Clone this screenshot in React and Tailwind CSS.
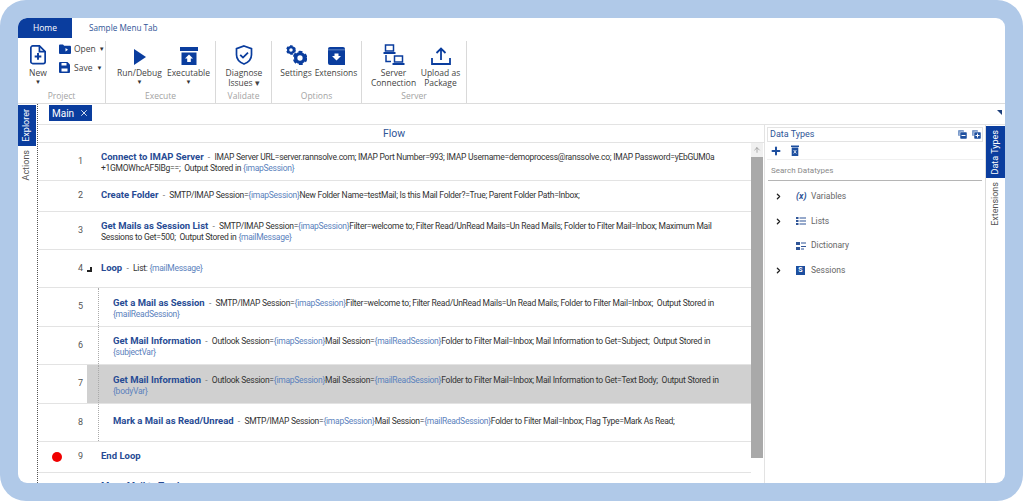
import { X, ChevronRight, Plus, ArrowUp } from 'lucide-react';

const BLUE = '#0a3d9e';

const NewIcon = () => (
  <svg width="18" height="20" viewBox="0 0 18 21" fill="none" stroke={BLUE} strokeWidth="1.8">
    <path d="M1.5 3a2 2 0 0 1 2-2h7l6 6v10.500a2 2 0 0 1-2 2h-11a2 2 0 0 1-2-2z" />
    <path d="M10.500 1v6h6" />
    <path d="M9 8.500v7M5.500 12h7" strokeWidth="2" />
  </svg>
);
const OpenIcon = () => (
  <svg width="12" height="10" viewBox="0 0 12 10" fill={BLUE}>
    <path d="M0 1.500a1 1 0 0 1 1-1h3l1.200 1.200H11a1 1 0 0 1 1 1V9a1 1 0 0 1-1 1H1a1 1 0 0 1-1-1z" />
    <path d="M6.500 4l2.500 1.800-2.500 1.800z" fill="#fff" />
  </svg>
);
const SaveIcon = () => (
  <svg width="11" height="11" viewBox="0 0 11 11" fill={BLUE}>
    <path d="M0 1a1 1 0 0 1 1-1h7.500L11 2.500V10a1 1 0 0 1-1 1H1a1 1 0 0 1-1-1z" />
    <rect x="2.500" y="1" width="5" height="2.500" fill="#fff" />
    <rect x="2.500" y="6.500" width="6" height="3" fill="#fff" />
  </svg>
);
const PlayIcon = () => (
  <svg width="14" height="16" viewBox="0 0 14 16" fill={BLUE}><path d="M1 0l12 8-12 8z" /></svg>
);
const ExecutableIcon = () => (
  <svg width="18" height="18" viewBox="0 0 18 18" fill={BLUE}>
    <rect x="0" y="0" width="18" height="4" />
    <path d="M1.500 5.500h15V18h-15z" />
    <path d="M9 7.500l4 4h-2.200V15H7.200v-3.500H5z" fill="#fff" />
  </svg>
);
const ShieldIcon = () => (
  <svg width="18" height="20" viewBox="0 0 18 20" fill="none" stroke={BLUE} strokeWidth="1.700">
    <path d="M9 1l7.500 2.700v6c0 4.500-3 7.500-7.500 9.300-4.500-1.800-7.500-4.800-7.500-9.300v-6z" />
    <path d="M5.200 9.800l2.800 2.800 5-5" strokeWidth="1.800" />
  </svg>
);
const Gear = ({ cx, cy, r }) => (
  <g>
    <circle cx={cx} cy={cy} r={r * 0.72} fill="none" stroke={BLUE} strokeWidth={r * 0.56} />
    <circle cx={cx} cy={cy} r={r} fill="none" stroke={BLUE} strokeWidth={r * 0.42} strokeDasharray={`${r * 0.62} ${r * 0.47}`} />
  </g>
);
const SettingsIcon = () => (
  <svg width="21" height="20" viewBox="0 0 21 20"><Gear cx={5} cy={5} r={4} /><Gear cx={14} cy={13} r={6} /></svg>
);
const ExtensionsIcon = () => (
  <svg width="17" height="18" viewBox="0 0 17 18" fill={BLUE}>
    <path d="M2 0h13a2 2 0 0 1 2 2v16H2a2 2 0 0 1-2-2V2a2 2 0 0 1 2-2z" />
    <path d="M0 2.500h17v.7H0z" fill="#7f9ed0" />
    <path d="M6.500 6.500h4V9H13l-4.500 4.500L4 9h2.500z" fill="#fff" />
  </svg>
);
const ServerIcon = () => (
  <svg width="22" height="21" viewBox="0 0 22 21" fill="none" stroke={BLUE} strokeWidth="1.500">
    <rect x="2.500" y="1" width="8" height="6" />
    <path d="M0.500 9h12" strokeWidth="2" />
    <path d="M3 11v6.500h5" />
    <rect x="11.500" y="12" width="8" height="6" />
    <path d="M9.500 20h12" strokeWidth="2" />
  </svg>
);
const UploadIcon = () => (
  <svg width="20" height="18" viewBox="0 0 20 18" fill="none" stroke={BLUE} strokeWidth="1.800">
    <path d="M10 13V1.500M5.500 6L10 1.500 14.500 6" />
    <path d="M1 11v6h18v-6" />
  </svg>
);
const Caret = () => <span className="text-[6px] leading-none text-[#333]">▼</span>;

const RibbonButton = ({ icon, children, caret, width }) => (
  <div className="flex shrink-0 flex-col items-center" style={{ width }}>
    <div className="flex h-[24px] items-end">{icon}</div>
    <div className="mt-[3px] text-center text-[8.5px] leading-[9.500px] whitespace-nowrap text-[#444]">{children}</div>
    {caret && <div className="flex h-[8px] items-center"><Caret /></div>}
  </div>
);

const Group = ({ label, width, inset, children }) => (
  <div className="flex h-[62px] shrink-0 flex-col border-r border-[#d9d9d9]" style={{ width }}>
    <div className={`flex h-[49px] ${inset}`}>{children}</div>
    <div className="text-center text-[8.5px] leading-[12px] text-[#a3a3a3]">{label}</div>
  </div>
);

const V = ({ children }) => <span className="text-[#5b82bd]">{children}</span>;

const rows = [
  { n: 1, h: 38, pad: 'pt-[8px]', title: 'Connect to IMAP Server', lines: [
    <>IMAP Server URL=server.rannsolve.com; IMAP Port Number=993; IMAP Username=demoprocess@ranssolve.co; IMAP Password=yEbGUM0a</>,
    <>+1GMOWhcAF5IBg==;&nbsp; Output Stored in <V>{'{imapSession}'}</V></>,
  ] },
  { n: 2, h: 31, pad: 'pt-[8px]', title: 'Create Folder', lines: [
    <>SMTP/IMAP Session=<V>{'{imapSession}'}</V>New Folder Name=testMail; Is this Mail Folder?=True; Parent Folder Path=Inbox;</>,
  ] },
  { n: 3, h: 38, pad: 'pt-[8px]', title: 'Get Mails as Session List', lines: [
    <>SMTP/IMAP Session=<V>{'{imapSession}'}</V>Filter=welcome to; Filter Read/UnRead Mails=Un Read Mails; Folder to Filter Mail=Inbox; Maximum Mail</>,
    <>Sessions to Get=500;&nbsp; Output Stored in <V>{'{mailMessage}'}</V></>,
  ] },
  { n: 4, h: 38, pad: 'pt-[12px]', title: 'Loop', toggle: true, lines: [<>List: <V>{'{mailMessage}'}</V></>] },
  { n: 5, h: 39, pad: 'pt-[9px]', nested: true, title: 'Get a Mail as Session', lines: [
    <>SMTP/IMAP Session=<V>{'{imapSession}'}</V>Filter=welcome to; Filter Read/UnRead Mails=Un Read Mails; Folder to Filter Mail=Inbox;&nbsp; Output Stored in</>,
    <V>{'{mailReadSession}'}</V>,
  ] },
  { n: 6, h: 38, pad: 'pt-[8px]', nested: true, title: 'Get Mail Information', lines: [
    <>Outlook Session=<V>{'{imapSession}'}</V>Mail Session=<V>{'{mailReadSession}'}</V>Folder to Filter Mail=Inbox; Mail Information to Get=Subject;&nbsp; Output Stored in</>,
    <V>{'{subjectVar}'}</V>,
  ] },
  { n: 7, h: 39, pad: 'pt-[9px]', nested: true, selected: true, title: 'Get Mail Information', lines: [
    <>Outlook Session=<V>{'{imapSession}'}</V>Mail Session=<V>{'{mailReadSession}'}</V>Folder to Filter Mail=Inbox; Mail Information to Get=Text Body;&nbsp; Output Stored in</>,
    <V>{'{bodyVar}'}</V>,
  ] },
  { n: 8, h: 38, pad: 'pt-[11px]', nested: true, title: 'Mark a Mail as Read/Unread', lines: [
    <>SMTP/IMAP Session=<V>{'{imapSession}'}</V>Mail Session=<V>{'{mailReadSession}'}</V>Folder to Filter Mail=Inbox; Flag Type=Mark As Read;</>,
  ] },
  { n: 9, h: 31, pad: 'pt-[8px]', title: 'End Loop', breakpoint: true, lines: [] },
  { n: 10, h: 38, pad: 'pt-[7px]', title: 'Move Mail to Trash', hideNumber: true, lines: [] },
];

const RowText = ({ row }) => (
  <div className={`${row.pad} text-[8.5px] leading-[11px] tracking-[-0.26px] whitespace-nowrap text-[#333]`}>
    <div>
      <span className="text-[9.5px] font-bold tracking-normal text-[#274b94]">{row.title}</span>
      {row.lines.length > 0 && <span className="tracking-normal text-[#777]">&nbsp; - &nbsp;</span>}
      {row.lines[0]}
    </div>
    {row.lines[1] && <div>{row.lines[1]}</div>}
  </div>
);

const FlowRow = ({ row }) => (
  <div className="flex shrink-0 border-b border-[#e3e3e3]" style={{ height: row.h }}>
    <div className="relative flex w-[47px] shrink-0 items-center justify-end">
      {row.breakpoint && <span className="mr-[14px] h-[10px] w-[10px] rounded-full bg-[#f00000]" />}
      <span className={`w-[9px] text-center text-[9px] text-[#555] ${row.hideNumber ? 'invisible' : ''}`}>{row.n}</span>
      {row.toggle && <span className="absolute top-[17px] left-[49px] h-[5px] w-[5px] border-r-2 border-b-2 border-[#222]" />}
    </div>
    <div className="flex min-w-0 flex-1">
      <div className="w-[16px] shrink-0" />
      {row.nested ? (
        row.selected ? (
          <div className="relative -ml-[14px] flex-1 bg-[#d0d0d0] pl-[26px]">
            <span className="absolute top-0 bottom-0 left-[11px] border-l border-dotted border-[#aaa]" />
            <RowText row={row} />
          </div>
        ) : (
          <div className="-ml-[3px] flex-1 border-l border-dotted border-[#aaa] pl-[14px]">
            <RowText row={row} />
          </div>
        )
      ) : (
        <div className="flex-1"><RowText row={row} /></div>
      )}
    </div>
  </div>
);

const VariablesIcon = () => <span className="w-[12px] text-[9px] leading-none font-bold whitespace-nowrap text-[#2f5597] italic">(x)</span>;
const ListsIcon = () => (
  <svg width="10" height="8" viewBox="0 0 10 8" fill="#2f5597">
    <rect width="2.500" height="2" /><rect x="3.500" width="6.500" height="1" y="0.500" />
    <rect y="3" width="2.500" height="2" /><rect x="3.500" y="3.500" width="6.500" height="1" />
    <rect y="6" width="2.500" height="2" /><rect x="3.500" y="6.500" width="6.500" height="1" />
  </svg>
);
const DictionaryIcon = () => (
  <svg width="10" height="8" viewBox="0 0 10 8" fill="#2f5597">
    <rect width="4" height="3" /><rect x="5" y="0.500" width="5" height="1" />
    <rect y="5" width="4" height="3" /><rect x="5" y="4" width="5" height="1" /><rect x="5" y="6.500" width="3" height="1" />
  </svg>
);
const SessionsIcon = () => (
  <span className="flex h-[9px] w-[9px] items-center justify-center bg-[#1d4f9f] text-[7px] leading-none font-bold text-white">S</span>
);

const tree = [
  { label: 'Variables', icon: <VariablesIcon />, arrow: true },
  { label: 'Lists', icon: <ListsIcon />, arrow: true },
  { label: 'Dictionary', icon: <DictionaryIcon /> },
  { label: 'Sessions', icon: <SessionsIcon />, arrow: true },
];

const PanelCopy = ({ minus }) => (
  <svg width="9" height="9" viewBox="0 0 9 9">
    <rect x="0" y="0" width="6" height="6" rx="1" fill="#7d9ccb" />
    <rect x="2" y="2" width="7" height="7" rx="1" fill="#1d4f9f" stroke="#fff" strokeWidth="0.500" />
    {minus ? <rect x="3.500" y="5" width="4" height="1" fill="#fff" /> : <path d="M3.500 5.500h4M5.500 3.500v4" stroke="#fff" />}
  </svg>
);

const TrashIcon = () => (
  <svg width="8" height="11" viewBox="0 0 8 11" fill="#1d4f9f">
    <rect x="0" y="0.500" width="8" height="1.500" />
    <path d="M0.700 2.500h6.600V11H0.700z" />
    <path d="M2.700 5l2.600 3.500M5.300 5L2.700 8.500" stroke="#fff" strokeWidth="0.800" />
  </svg>
);

export default function App() {
  return (
    <div className="h-[502px] w-[1024px] overflow-hidden bg-white font-['Roboto',sans-serif]">
      <div className="h-[501px] w-[1023px] overflow-hidden rounded-[26px] bg-[#b0c9e8] pt-[18px] pr-[18px] pb-[18px] pl-[18px]">
        <div className="flex h-[465px] w-[987px] flex-col overflow-hidden rounded-[9px] bg-white">
          {/* menu tabs */}
          <div className="flex h-[20px] shrink-0 font-['Open_Sans',sans-serif] text-[8.2px]">
            <div className="flex w-[54px] items-center justify-center rounded-tl-[8px] bg-[#0a3d9e] text-[8.5px] text-white">Home</div>
            <div className="ml-[17px] flex items-center text-[#2f5597]">Sample Menu Tab</div>
          </div>

          {/* ribbon */}
          <div className="flex h-[66px] shrink-0 border-b border-[#dcdcdc] pt-[3px] font-['Open_Sans',sans-serif]">
            <Group label="Project" width={88} inset="pl-0">
              <RibbonButton icon={<NewIcon />} caret width={40}>New</RibbonButton>
              <div className="ml-[1px] flex w-[46px] flex-col gap-[8px] pt-[3px] text-[8.5px] leading-[10px] text-[#444]">
                <div className="flex items-center gap-[3px]"><OpenIcon /><span>Open</span><Caret /></div>
                <div className="flex items-center gap-[4px]"><SaveIcon /><span>Save</span><Caret /></div>
              </div>
            </Group>
            <Group label="Execute" width={110} inset="pl-[9px]">
              <RibbonButton icon={<PlayIcon />} caret width={49}>Run/Debug</RibbonButton>
              <RibbonButton icon={<ExecutableIcon />} caret width={49}>Executable</RibbonButton>
            </Group>
            <Group label="Validate" width={56} inset="pl-[3px]">
              <RibbonButton icon={<ShieldIcon />} width={50}>Diagnose<br />Issues ▾</RibbonButton>
            </Group>
            <Group label="Options" width={90} inset="pl-[4px]">
              <RibbonButton icon={<SettingsIcon />} width={40}>Settings</RibbonButton>
              <RibbonButton icon={<ExtensionsIcon />} width={40}>Extensions</RibbonButton>
            </Group>
            <Group label="Server" width={105} inset="pl-[8px]">
              <RibbonButton icon={<ServerIcon />} width={47}>Server<br />Connection</RibbonButton>
              <RibbonButton icon={<UploadIcon />} width={47}>Upload as<br />Package</RibbonButton>
            </Group>
          </div>

          <div className="flex min-h-0 flex-1">
            {/* left tabs */}
            <div className="flex w-[20px] shrink-0 flex-col items-start border-r border-dotted border-[#555] pt-[1px] text-[9px]">
              <div className="flex h-[41px] w-[18px] items-center justify-center bg-[#0a3d9e] text-white"><span className="rotate-180 [writing-mode:vertical-rl]">Explorer</span></div>
              <div className="flex h-[38px] w-[18px] items-center justify-center text-[#555]"><span className="rotate-180 [writing-mode:vertical-rl]">Actions</span></div>
            </div>

            <div className="relative flex min-w-0 flex-1 flex-col">
              {/* document tabs */}
              <div className="flex h-[21px] shrink-0 items-start border-b border-[#e3e3e3] pt-[1px] pl-[11px]">
                <div className="flex h-[16px] w-[43px] items-center justify-between bg-[#0a3d9e] pr-[3px] pl-[3px] text-[10px] text-white">
                  Main <X size={10} strokeWidth={2} />
                </div>
              </div>
              <span className="absolute top-[6px] right-[3px] h-0 w-0 border-t-[5px] border-l-[5px] border-t-[#1d3f7a] border-l-transparent" />

              <div className="flex min-h-0 flex-1">
                {/* flow */}
                <div className="flex w-[727px] min-w-0 shrink-0 flex-col border-r border-[#e3e3e3]">
                  <div className="flex h-[18px] shrink-0 items-center justify-center border-b border-[#e3e3e3] pr-[14px] text-[10.5px] text-[#2f5597]">Flow</div>
                  <div className="flex min-h-0 flex-1 overflow-hidden">
                    <div className="flex w-[713px] shrink-0 flex-col">
                      {rows.map((r) => <FlowRow key={r.n} row={r} />)}
                    </div>
                    <div className="w-[12px] shrink-0">
                      <div className="flex h-[14px] items-center justify-center bg-[#f0f0f0] text-[#888]"><ArrowUp size={8} /></div>
                      <div className="h-[301px] bg-[#a9a9a9]" />
                    </div>
                  </div>
                </div>

                {/* data types */}
                <div className="flex w-[220px] shrink-0 flex-col px-[2px] pt-[2px]">
                  <div className="flex h-[15px] shrink-0 items-center justify-between border border-[#e3e3e3] pr-[1px] pl-[2px] text-[9px] text-[#2f5597]">
                    Data Types
                    <span className="flex gap-[5px]"><PanelCopy minus /><PanelCopy /></span>
                  </div>
                  <div className="flex h-[18px] shrink-0 items-center gap-[9px] border-b border-[#f0f0f0] pl-[3px]">
                    <Plus size={12} strokeWidth={4} color="#1d4f9f" />
                    <TrashIcon />
                  </div>
                  <div className="mx-[1px] flex h-[21px] shrink-0 items-end border-b border-[#b5b5b5] pb-[3px] pl-[3px] text-[8px] text-[#8a8a8a]">Search Datatypes</div>
                  <div className="flex flex-col pt-[3px]">
                    {tree.map((t) => (
                      <div key={t.label} className="flex h-[24.700px] items-center text-[8.5px] text-[#666]">
                        <span className="ml-[4px] flex w-[14px] justify-center">{t.arrow && <ChevronRight size={9} strokeWidth={3.500} color="#222" />}</span>
                        <span className="ml-[11px] flex w-[15px] items-center">{t.icon}</span>
                        <span>{t.label}</span>
                      </div>
                    ))}
                  </div>
                </div>

                {/* right tabs */}
                <div className="w-[20px] shrink-0 border-l border-[#dcdcdc] text-[9px]">
                  <div className="mt-[1px] flex h-[52px] items-center justify-center bg-[#0a3d9e] text-white"><span className="rotate-180 [writing-mode:vertical-rl]">Data Types</span></div>
                  <div className="mt-[4px] flex h-[44px] items-center justify-center text-[#555]"><span className="rotate-180 [writing-mode:vertical-rl]">Extensions</span></div>
                </div>
              </div>
            </div>
          </div>
        </div>
      </div>
    </div>
  );
}
